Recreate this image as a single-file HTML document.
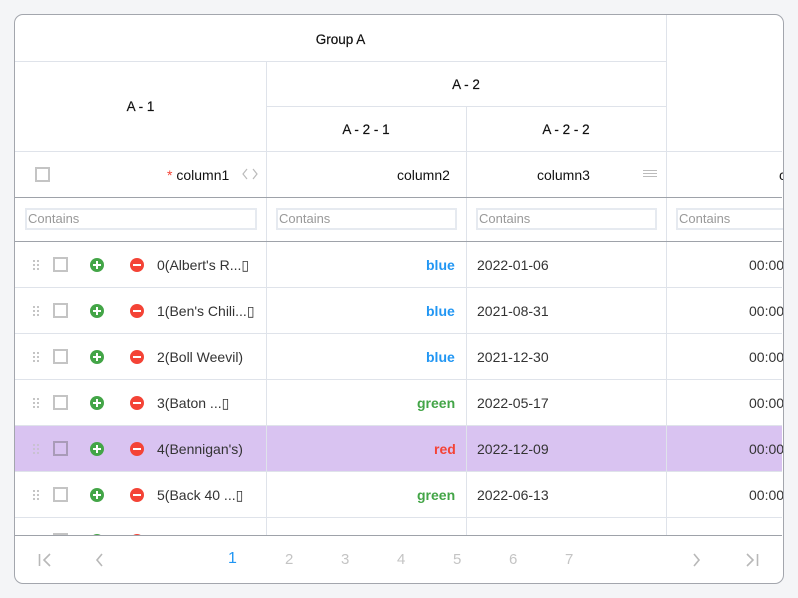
<!DOCTYPE html>
<html><head><meta charset="utf-8"><style>
*{box-sizing:border-box;margin:0;padding:0}
body{width:798px;height:598px;background:#f4f5f7;font-family:"Liberation Sans",sans-serif;font-size:14px;color:#333;position:relative;overflow:hidden}
.box{position:absolute;left:14px;top:14px;width:770px;height:570px;border:1px solid #a3a6ad;border-radius:9px;background:#fff;overflow:hidden}
.a{position:absolute}
.hl{position:absolute;height:1px;background:#dfe3ea}
.vl{position:absolute;width:1px;background:#dfe3ea}
.dl{position:absolute;height:1px;background:#9ea2a9}
.ht{position:absolute;font-size:13.5px;color:#111;text-align:center;line-height:16px;-webkit-text-stroke:0.2px #111}
.cb{position:absolute;width:15px;height:15px;border:2px solid #c4c4c4;background:#fff}
.inp{position:absolute;height:22px;border:2px solid #e6eaf0;color:#999;font-size:13px;line-height:18px;padding-left:1px;background:#fff}
.plus,.minus{position:absolute;width:14px;height:14px;border-radius:50%}
.plus{background:#43a547}.minus{background:#f44336}
.plus:before,.minus:before{content:"";position:absolute;left:3px;top:6px;width:8px;height:2px;background:#fff}
.plus:after{content:"";position:absolute;left:6px;top:3px;width:2px;height:8px;background:#fff}
.dots{position:absolute;width:7px;height:11px;background-image:radial-gradient(circle,#c0c0c0 1px,transparent 1.2px);background-size:4px 4px}
.t{position:absolute;line-height:18px;font-size:14px;color:#333;white-space:nowrap}
.pg{position:absolute;top:551px;font-size:15px;color:#c4c4c4}
</style></head><body>
<div class="box">
<div style="position:absolute;left:-15px;top:-15px;width:798px;height:598px">
<div class="a" style="left:15px;top:426px;width:767px;height:46px;background:#d9c3f1"></div>
<div class="vl" style="left:666px;top:15px;height:520px"></div>
<div class="vl" style="left:266px;top:62px;height:473px"></div>
<div class="vl" style="left:466px;top:107px;height:428px"></div>
<div class="hl" style="left:15px;top:61px;width:651px"></div>
<div class="hl" style="left:266px;top:106px;width:400px"></div>
<div class="hl" style="left:15px;top:151px;width:767px"></div>
<div class="dl" style="left:15px;top:197px;width:767px"></div>
<div class="dl" style="left:15px;top:241px;width:767px"></div>
<div class="hl" style="left:15px;top:287px;width:767px"></div>
<div class="hl" style="left:15px;top:333px;width:767px"></div>
<div class="hl" style="left:15px;top:379px;width:767px"></div>
<div class="hl" style="left:15px;top:425px;width:767px"></div>
<div class="hl" style="left:15px;top:471px;width:767px"></div>
<div class="hl" style="left:15px;top:517px;width:767px"></div>
<div class="ht" style="left:15px;width:651px;top:32px">Group A</div>
<div class="ht" style="left:15px;width:251px;top:99px">A - 1</div>
<div class="ht" style="left:266px;width:400px;top:77px">A - 2</div>
<div class="ht" style="left:266px;width:200px;top:122px">A - 2 - 1</div>
<div class="ht" style="left:466px;width:200px;top:122px">A - 2 - 2</div>
<div class="cb" style="left:35px;top:167px"></div>
<div class="t" style="left:167px;top:166px;color:#111"><span style="color:#f44336">*</span> column1</div>
<svg class="a" style="left:241px;top:168px" width="18" height="12"><path d="M6 1L2 6l4 5M12 1l4 5-4 5" stroke="#bbb" stroke-width="1.2" fill="none"/></svg>
<div class="t" style="left:397px;top:166px;color:#111">column2</div>
<div class="t" style="left:537px;top:166px;color:#111">column3</div>
<div class="a" style="left:643px;top:170px;width:14px;height:1px;background:#bbb;box-shadow:0 3px 0 #bbb,0 6px 0 #bbb"></div>
<div class="t" style="left:779px;top:166px;color:#111">c</div>
<div class="inp" style="left:25px;top:208px;width:232px">Contains</div>
<div class="inp" style="left:276px;top:208px;width:181px">Contains</div>
<div class="inp" style="left:476px;top:208px;width:181px">Contains</div>
<div class="inp" style="left:676px;top:208px;width:120px">Contains</div>

<div class="dots" style="left:32px;top:259px"></div><div class="cb" style="left:53px;top:257px"></div><div class="plus" style="left:90px;top:258px"></div><div class="minus" style="left:130px;top:258px"></div>
<div class="t" style="left:157px;top:256px">0(Albert's R...▯</div><div class="t" style="left:426px;top:256px;color:#2196f3;font-weight:bold">blue</div><div class="t" style="left:477px;top:256px">2022-01-06</div><div class="t" style="left:749px;top:256px">00:00</div>

<div class="dots" style="left:32px;top:305px"></div><div class="cb" style="left:53px;top:303px"></div><div class="plus" style="left:90px;top:304px"></div><div class="minus" style="left:130px;top:304px"></div>
<div class="t" style="left:157px;top:302px">1(Ben's Chili...▯</div><div class="t" style="left:426px;top:302px;color:#2196f3;font-weight:bold">blue</div><div class="t" style="left:477px;top:302px">2021-08-31</div><div class="t" style="left:749px;top:302px">00:00</div>

<div class="dots" style="left:32px;top:351px"></div><div class="cb" style="left:53px;top:349px"></div><div class="plus" style="left:90px;top:350px"></div><div class="minus" style="left:130px;top:350px"></div>
<div class="t" style="left:157px;top:348px">2(Boll Weevil)</div><div class="t" style="left:426px;top:348px;color:#2196f3;font-weight:bold">blue</div><div class="t" style="left:477px;top:348px">2021-12-30</div><div class="t" style="left:749px;top:348px">00:00</div>

<div class="dots" style="left:32px;top:397px"></div><div class="cb" style="left:53px;top:395px"></div><div class="plus" style="left:90px;top:396px"></div><div class="minus" style="left:130px;top:396px"></div>
<div class="t" style="left:157px;top:394px">3(Baton ...▯</div><div class="t" style="left:417px;top:394px;color:#43a547;font-weight:bold">green</div><div class="t" style="left:477px;top:394px">2022-05-17</div><div class="t" style="left:749px;top:394px">00:00</div>

<div class="dots" style="left:32px;top:443px;opacity:.7"></div><div class="cb" style="left:53px;top:441px;background:transparent;border-color:#a99bb8"></div><div class="plus" style="left:90px;top:442px"></div><div class="minus" style="left:130px;top:442px"></div>
<div class="t" style="left:157px;top:440px">4(Bennigan's)</div><div class="t" style="left:434px;top:440px;color:#f44336;font-weight:bold">red</div><div class="t" style="left:477px;top:440px">2022-12-09</div><div class="t" style="left:749px;top:440px">00:00</div>

<div class="dots" style="left:32px;top:489px"></div><div class="cb" style="left:53px;top:487px"></div><div class="plus" style="left:90px;top:488px"></div><div class="minus" style="left:130px;top:488px"></div>
<div class="t" style="left:157px;top:486px">5(Back 40 ...▯</div><div class="t" style="left:417px;top:486px;color:#43a547;font-weight:bold">green</div><div class="t" style="left:477px;top:486px">2022-06-13</div><div class="t" style="left:749px;top:486px">00:00</div>

<div class="a" style="left:15px;top:518px;width:767px;height:17px;overflow:hidden">
<div class="cb" style="left:38px;top:15px"></div><div class="plus" style="left:75px;top:16px"></div><div class="minus" style="left:115px;top:16px"></div>
</div>
<div class="dl" style="left:15px;top:535px;width:767px"></div>
</div>
</div>
<svg class="a" style="left:38px;top:553px" width="14" height="14"><path d="M1.5 1v12M12 1L6 7l6 6" stroke="#b8b8b8" stroke-width="1.6" fill="none"/></svg>
<svg class="a" style="left:95px;top:553px" width="10" height="14"><path d="M7 1L2 7l5 6" stroke="#b8b8b8" stroke-width="1.6" fill="none"/></svg>
<div class="pg" style="left:228px;color:#2196f3;font-size:16px;top:550px">1</div>
<div class="pg" style="left:285px">2</div>
<div class="pg" style="left:341px">3</div>
<div class="pg" style="left:397px">4</div>
<div class="pg" style="left:453px">5</div>
<div class="pg" style="left:509px">6</div>
<div class="pg" style="left:565px">7</div>
<svg class="a" style="left:692px;top:553px" width="10" height="14"><path d="M2 1l5 6-5 6" stroke="#b8b8b8" stroke-width="1.6" fill="none"/></svg>
<svg class="a" style="left:745px;top:553px" width="14" height="14"><path d="M12.5 1v12M2 1l6 6-6 6" stroke="#b8b8b8" stroke-width="1.6" fill="none"/></svg>
</body></html>
